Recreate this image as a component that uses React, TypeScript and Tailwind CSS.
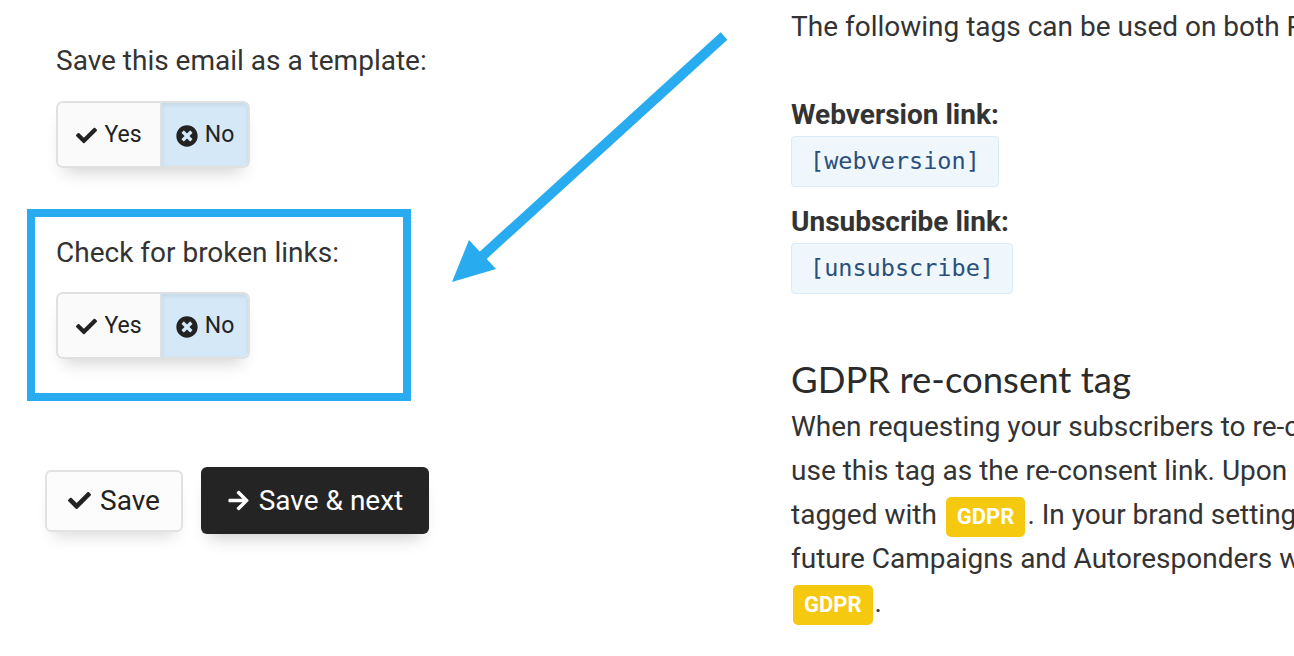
import { FaCheck, FaTimesCircle, FaArrowRight } from "react-icons/fa";

const Toggle = () => (
  <div className="flex h-[67px] w-[194px] overflow-hidden rounded-[7px] border-2 border-[#e0e0e0] shadow-[0_12px_16px_-8px_rgba(0,0,0,0.18)]">
    <div className="flex w-[102px] items-center justify-center gap-[7px] bg-[#fafafa] pt-[2px] text-[23px] text-[#222]">
      <FaCheck className="h-[21px] w-[21px]" />
      Yes
    </div>
    <div className="flex flex-1 items-center justify-center gap-[7px] border-l-2 border-[#e0e0e0] bg-[#d4e8f7] pt-[2px] text-[23px] text-[#222] shadow-[inset_0_2px_4px_rgba(0,0,0,0.08)]">
      <FaTimesCircle className="h-[22px] w-[22px]" />
      No
    </div>
  </div>
);

const Badge = () => (
  <span className="mx-[2px] inline-flex h-[40px] items-center rounded-[5px] bg-[#f5c90f] px-[11px] align-middle text-[22px] font-bold text-white">
    GDPR
  </span>
);

export default function App() {
  return (
    <div className="relative flex h-[656px] w-[1294px] overflow-hidden bg-white font-['Roboto',sans-serif] text-[#333]">
      <div className="w-[791px] shrink-0 pl-[27px] pt-[41px]">
        <div className="pl-[29px]">
          <p className="text-[28px] leading-[39px]">Save this email as a template:</p>
          <div className="mt-[21px]">
            <Toggle />
          </div>
        </div>

        <div className="mt-[41px] h-[192px] w-[384px] border-[8px] border-[#29abf0] pl-[21px] pt-[16px]">
          <p className="text-[28px] leading-[39px]">Check for broken links:</p>
          <div className="mt-[20px]">
            <Toggle />
          </div>
        </div>

        <div className="mt-[66px] flex items-center gap-[18px] pl-[18px]">
          <button className="flex h-[62px] w-[138px] items-center justify-center gap-[9px] rounded-[6px] border-2 border-[#e2e2e2] bg-[#fcfcfc] text-[28px] text-[#222] shadow-[0_12px_16px_-8px_rgba(0,0,0,0.15)]">
            <FaCheck className="h-[23px] w-[23px]" />
            Save
          </button>
          <button className="flex h-[67px] w-[228px] items-center justify-center gap-[9px] rounded-[6px] bg-[#242424] text-[28px] text-white shadow-[0_12px_16px_-8px_rgba(0,0,0,0.2)]">
            <FaArrowRight className="h-[23px] w-[23px]" />
            Save &amp; next
          </button>
        </div>
      </div>

      <div className="min-w-0 flex-1 whitespace-nowrap pt-[7px] text-[28px]">
        <p className="leading-[40px]">The following tags can be used on both Plain text and HTML emails:</p>

        <p className="mt-[48px] font-bold leading-[40px]">Webversion link:</p>
        <div className="mt-[1px] inline-flex h-[51px] items-center rounded-[4px] border border-[#d9ebf8] bg-[#eff7fd] px-[18px] font-['DejaVu_Sans_Mono',monospace] text-[23.5px] text-[#2a4f7b]">
          [webversion]
        </div>

        <p className="mt-[15px] font-bold leading-[40px]">Unsubscribe link:</p>
        <div className="mt-[1px] inline-flex h-[51px] items-center rounded-[4px] border border-[#d9ebf8] bg-[#eff7fd] px-[18px] font-['DejaVu_Sans_Mono',monospace] text-[23.5px] text-[#2a4f7b]">
          [unsubscribe]
        </div>

        <h2 className="mt-[63px] font-['Lato',sans-serif] text-[36.5px] leading-[44px] text-[#2b2b2b]">
          GDPR re-consent tag
        </h2>
        <p className="mt-[4px] leading-[44px]">
          When requesting your subscribers to re-confirm their consent, you can
          <br />
          use this tag as the re-consent link. Upon clicking, they will be
          <br />
          tagged with <Badge />. In your brand settings, you can choose whether
          <br />
          future Campaigns and Autoresponders will exclude subscribers tagged
          <br />
          <Badge />.
        </p>
      </div>

      <svg
        className="pointer-events-none absolute left-0 top-0"
        width="1294"
        height="656"
        viewBox="0 0 1294 656"
      >
        <line x1="724" y1="36" x2="478" y2="260" stroke="#29abf0" strokeWidth="10" />
        <polygon points="452,282 469,240 496,269" fill="#29abf0" />
      </svg>
    </div>
  );
}
